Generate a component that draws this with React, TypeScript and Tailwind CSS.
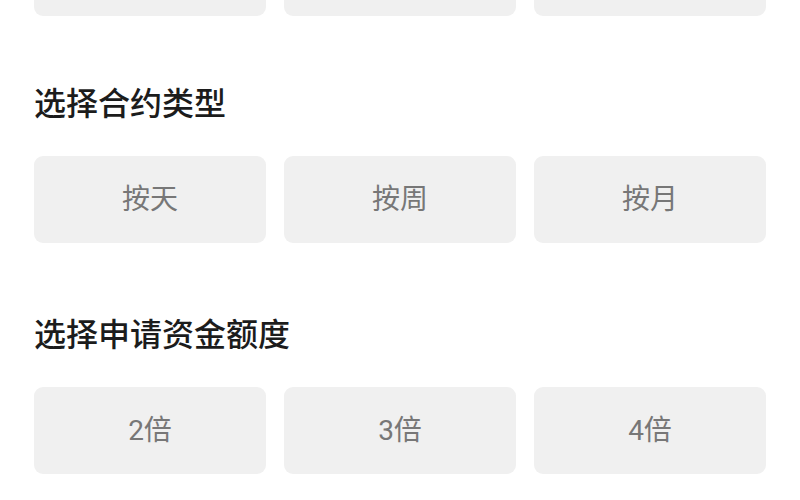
import React from 'react';

const Option = ({ label }: { label?: string }) => (
  <button className="h-[87px] rounded-[9px] bg-[#f0f0f0] flex items-center justify-center text-[28px] text-[#777777]">
    {label}
  </button>
);

const Row = ({ items, className = '' }: { items: (string | undefined)[]; className?: string }) => (
  <div className={`grid grid-cols-3 gap-[18px] ${className}`}>
    {items.map((it, i) => (
      <Option key={i} label={it} />
    ))}
  </div>
);

export default function App() {
  return (
    <div
      className="w-[800px] h-[500px] overflow-hidden bg-white px-[34px]"
      style={{ fontFamily: 'Roboto, "Noto Sans CJK SC", sans-serif' }}
    >
      <Row items={[undefined, undefined, undefined]} className="-mt-[71px]" />

      <h2 className="mt-[68px] h-[40px] leading-[40px] text-[32px] text-[#1c1c1c] font-medium">选择合约类型</h2>
      <Row items={['按天', '按周', '按月']} className="mt-[32px]" />

      <h2 className="mt-[72px] h-[40px] leading-[40px] text-[32px] text-[#1c1c1c] font-medium">选择申请资金额度</h2>
      <Row items={['2倍', '3倍', '4倍']} className="mt-[32px]" />
    </div>
  );
}
